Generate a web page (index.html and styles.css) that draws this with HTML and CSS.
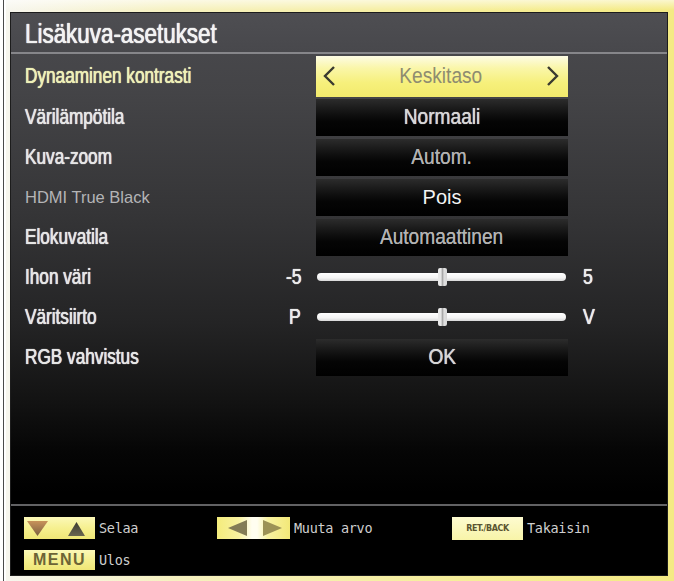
FILE: index.html
```html
<!DOCTYPE html>
<html lang="fi">
<head>
<meta charset="utf-8">
<title>Lisäkuva-asetukset</title>
<link rel="stylesheet" href="styles.css">
</head>
<body>
<div class="page">
  <div class="edge"></div>
  <div class="frame">
    <div class="panel">
      <div class="titlebar"><span class="title-text">Lisäkuva-asetukset</span></div>
      <div class="rows">
        <div class="label selected-label"><span class="narrow">Dynaaminen kontrasti</span></div>
        <div class="min"></div>
        <div class="box box-selected">
          <svg class="chev" width="14" height="22" viewBox="0 0 14 22"><polyline points="12,2 3,11 12,20" fill="none" stroke="#3a3a30" stroke-width="2.4"/></svg>
          <span class="val-wrap"><span class="val val-sel">Keskitaso</span></span>
          <svg class="chev" width="14" height="22" viewBox="0 0 14 22"><polyline points="2,2 11,11 2,20" fill="none" stroke="#3a3a30" stroke-width="2.4"/></svg>
        </div>
        <div class="max"></div>

        <div class="label"><span class="narrow">Värilämpötila</span></div>
        <div class="min"></div>
        <div class="box"><span class="val val-bright">Normaali</span></div>
        <div class="max"></div>

        <div class="label"><span class="narrow">Kuva-zoom</span></div>
        <div class="min"></div>
        <div class="box"><span class="val val-dim">Autom.</span></div>
        <div class="max"></div>

        <div class="label label-plain">HDMI True Black</div>
        <div class="min"></div>
        <div class="box"><span class="val-plain">Pois</span></div>
        <div class="max"></div>

        <div class="label"><span class="narrow">Elokuvatila</span></div>
        <div class="min"></div>
        <div class="box"><span class="val val-dim">Automaattinen</span></div>
        <div class="max"></div>

        <div class="label"><span class="narrow">Ihon väri</span></div>
        <div class="min"><span class="narrow narrow-right">-5</span></div>
        <div class="slider"><div class="track"><div class="handle"></div></div></div>
        <div class="max"><span class="narrow">5</span></div>

        <div class="label"><span class="narrow">Väritsiirto</span></div>
        <div class="min"><span class="narrow narrow-right">P</span></div>
        <div class="slider"><div class="track"><div class="handle"></div></div></div>
        <div class="max"><span class="narrow">V</span></div>

        <div class="label"><span class="narrow">RGB vahvistus</span></div>
        <div class="min"></div>
        <div class="box"><span class="val val-bright">OK</span></div>
        <div class="max"></div>
      </div>
      <div class="spacer"></div>
      <div class="footer">
        <div class="hint">
          <span class="key key-nav">
            <svg width="71" height="22" viewBox="0 0 71 22">
              <defs>
                <linearGradient id="gd" x1="0" y1="0" x2="0" y2="1"><stop offset="0" stop-color="#c8925a"/><stop offset="1" stop-color="#7a6040"/></linearGradient>
                <linearGradient id="gu" x1="0" y1="0" x2="0" y2="1"><stop offset="0" stop-color="#3c3a30"/><stop offset="1" stop-color="#6a6650"/></linearGradient>
              </defs>
              <polygon points="3,4 24,4 13.5,19" fill="url(#gd)"/>
              <polygon points="44,19 61,19 52.5,5" fill="url(#gu)"/>
            </svg>
          </span>
          <span class="hint-text">Selaa</span>
        </div>
        <div class="hint">
          <span class="key key-lr">
            <svg width="73" height="22" viewBox="0 0 73 22">
              <polygon points="11,11 30,3 30,19" fill="#837c56"/>
              <polygon points="46,3 46,19 65,11" fill="#9c9256"/>
            </svg>
          </span>
          <span class="hint-text">Muuta arvo</span>
        </div>
        <div class="hint">
          <span class="key key-back">RET./BACK</span>
          <span class="hint-text">Takaisin</span>
        </div>
        <div class="hint">
          <span class="key key-menu">MENU</span>
          <span class="hint-text">Ulos</span>
        </div>
      </div>
    </div>
  </div>
</div>
</body>
</html>
```
FILE: styles.css
```css
html, body {
  margin: 0;
  padding: 0;
  background: #ffffff;
}

.page {
  display: flex;
  width: 674px;
  height: 581px;
  overflow: hidden;
}

.edge {
  margin-left: 3px;
  width: 1px;
  background: #4a4a4a;
}

.frame {
  flex: 1;
  margin-left: 2px;
  display: flex;
  padding: 12px 6px 5px 4px;
  background:
    linear-gradient(to bottom, rgba(255,255,255,0.6) 0, rgba(255,255,255,0) 10px),
    linear-gradient(to right, #f7f6ee 0, #f6f1c0 25%, #f6ee98 70%, #f4ea84 100%);
}

.panel {
  flex: 1;
  display: flex;
  flex-direction: column;
  border: 1px solid #1c1c1c;
  background: linear-gradient(to bottom,
    #4a4a4e 0,
    #444447 80px,
    #353537 200px,
    #242425 310px,
    #121212 390px,
    #050505 440px,
    #000000 480px);
  font-family: "Liberation Sans", Arial, sans-serif;
}

.titlebar {
  height: 37px;
  padding: 2px 0 0 14px;
  line-height: 37px;
  background: linear-gradient(to bottom, #4e4e52, #48484c);
  border-bottom: 2px solid #86868a;
  font-size: 28px;
  color: #f2f2f2;
}

.title-text {
  display: inline-block;
  transform: scaleX(0.8);
  transform-origin: left center;
  text-shadow: 0 0 1px #ffffff, 0 0 1px #ffffff;
}

.rows {
  padding-top: 1px;
  display: grid;
  grid-template-columns: 271px 34px 252px 1fr;
  grid-template-rows: 42px repeat(7, 40px);
}

.narrow {
  display: inline-block;
  transform: scaleX(0.8);
  transform-origin: left center;
  text-shadow: 0 0 0.8px currentColor, 0 0 0.8px currentColor;
}

.narrow-right {
  transform-origin: right center;
}

.label {
  padding-left: 14px;
  align-self: center;
  font-size: 21.5px;
  color: #e6e6e6;
  white-space: nowrap;
}

.selected-label {
  color: #eef0b8;
}

.label-plain {
  font-size: 16.5px;
  color: #b4b4b6;
}

.min {
  align-self: center;
  text-align: right;
  padding-right: 15px;
  font-size: 22px;
  color: #ececec;
}

.max {
  align-self: center;
  padding-left: 15px;
  font-size: 22px;
  color: #ececec;
}

.box {
  align-self: center;
  height: 37px;
  display: flex;
  align-items: center;
  justify-content: center;
  background: linear-gradient(to bottom, #2c2c2c 0, #141414 35%, #050505 60%, #000000 100%);
}

.box-selected {
  height: 41px;
  justify-content: space-between;
  padding: 0 8px 0 6px;
  background: linear-gradient(to bottom, #fdfce4 0, #faf6a8 30%, #f6f07c 65%, #f2ea6c 100%);
}

.chev {
  display: block;
}

.val-wrap {
  flex: 1;
  text-align: center;
}

.val {
  display: inline-block;
  font-size: 22.5px;
  transform: scaleX(0.85);
  transform-origin: center center;
  white-space: nowrap;
}

.val-sel {
  color: #8e8c70;
}

.val-bright {
  color: #d6d6d6;
  text-shadow: 0 0 0.8px #ffffff;
}

.val-dim {
  color: #b2b2b2;
  text-shadow: 0 0 0.6px #b2b2b2;
}

.val-plain {
  font-size: 20px;
  color: #f4f4f4;
}

.slider {
  align-self: center;
  padding: 0 2px 0 1px;
}

.track {
  position: relative;
  height: 8px;
  border-radius: 4px;
  background: linear-gradient(to bottom, #ffffff 0, #f4f4f4 60%, #d8d8d8 100%);
}

.handle {
  position: absolute;
  left: 121px;
  top: -5px;
  width: 9px;
  height: 18px;
  border-radius: 2px;
  background: linear-gradient(to right, #e8e8e8 0, #e8e8e8 35%, #a8a8a8 45%, #a8a8a8 55%, #e0e0e0 65%, #d8d8d8 100%);
}

.spacer {
  flex: 1;
}

.footer {
  height: 58px;
  padding: 11px 0 0 13px;
  border-top: 2px solid #626264;
  background: #000000;
  display: grid;
  grid-template-columns: 193px 235px 1fr;
  grid-template-rows: 22px 20px;
  row-gap: 11px;
}

.hint {
  display: flex;
  align-items: center;
  gap: 4px;
}

.hint-text {
  font-family: "DejaVu Sans Mono", "Liberation Mono", monospace;
  font-size: 13.5px;
  color: #cfcfcf;
  letter-spacing: -0.3px;
}

.key {
  display: flex;
  align-items: center;
  justify-content: center;
  height: 22px;
  background: linear-gradient(to bottom, #fbf8b8 0, #f6f090 50%, #efe676 100%);
}

.key svg {
  display: block;
}

.key-nav {
  width: 71px;
}

.key-lr {
  width: 73px;
  background: linear-gradient(to right, #f4ec7c 0, #f8f2a0 30%, #fffef0 48%, #fffef0 55%, #f8f2a0 70%, #f2e878 100%);
}

.key-back {
  width: 71px;
  height: 23px;
  font-family: "DejaVu Sans", sans-serif;
  font-weight: bold;
  font-size: 8px;
  letter-spacing: -0.4px;
  color: #5a5430;
  background: linear-gradient(to bottom, #fdfbd0 0, #f8f4a8 100%);
}

.key-menu {
  width: 71px;
  height: 20px;
  font-weight: bold;
  font-size: 16px;
  letter-spacing: 1.5px;
  color: #6c6436;
}
```
